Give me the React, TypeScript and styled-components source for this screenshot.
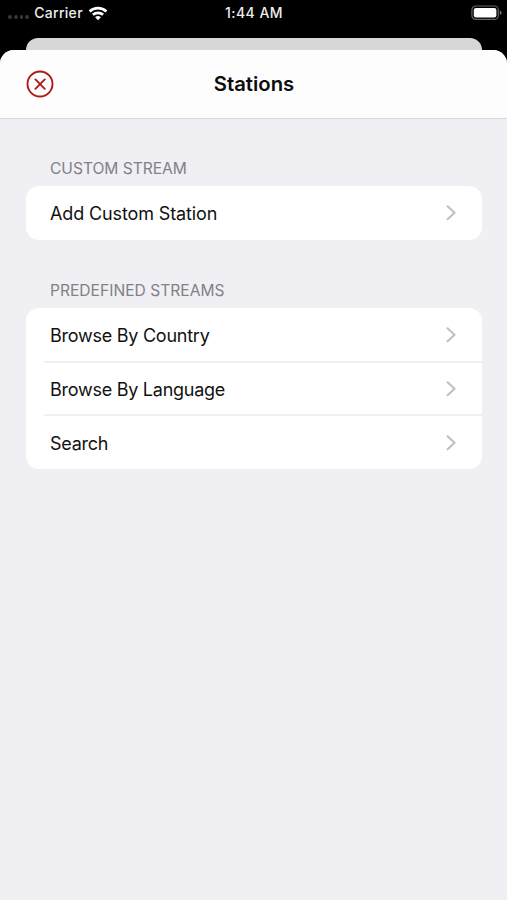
import React from "react";
import styled, { createGlobalStyle } from "styled-components";

const GlobalStyle = createGlobalStyle`
  *, *::before, *::after { box-sizing: border-box; }
  body { margin: 0; background: #000; }
`;

const Screen = styled.div`
  width: 507px;
  height: 900px;
  display: flex;
  flex-direction: column;
  background: #000;
  color: #111;
  font-family: Inter, "Liberation Sans", sans-serif;
  overflow: hidden;
`;

const StatusBar = styled.header`
  height: 38px;
  padding: 0 5px 12px 8px;
  display: grid;
  grid-template-columns: 1fr auto 1fr;
  align-items: center;
  color: #eee;
  font-size: 14px;
  font-weight: 500;
  line-height: 26px;
`;

const Carrier = styled.div`
  display: flex;
  align-items: center;
  gap: 5px;
`;

const SignalDots = styled.div`
  display: flex;
  gap: 2px;
  padding-top: 8px;
`;

const Dot = styled.i`
  width: 3.8px;
  height: 3.8px;
  border-radius: 50%;
  background: #383838;
`;

const Label = styled.span<{ $spacing?: number }>`
  letter-spacing: ${(p) => p.$spacing ?? 0}px;
  white-space: nowrap;
`;

const Clock = styled(Label)`
  margin-right: 2px;
`;

const BatterySlot = styled.div`
  display: flex;
  justify-content: flex-end;
`;

const BackCard = styled.div`
  flex: none;
  height: 26px;
  margin: 0 25px 0 25.5px;
  border-radius: 12px 12px 0 0;
  background: #d7d7da;
`;

const Sheet = styled.main`
  position: relative;
  flex: 1;
  margin-top: -14px;
  border-radius: 14px 14px 0 0;
  background: #efeff4;
  overflow: hidden;
`;

const NavBar = styled.div`
  height: 69px;
  padding: 0 25px 0 26px;
  display: grid;
  grid-template-columns: 28px 1fr 28px;
  align-items: center;
  background: #fdfdfe;
  border-bottom: 1px solid #d9d9dc;
`;

const CloseButton = styled.button`
  width: 28px;
  height: 28px;
  padding: 0;
  border: 0;
  display: flex;
  background: none;
`;

const Title = styled.h1`
  margin: 0;
  color: #0c0c0c;
  font-size: 20.3px;
  font-weight: 600;
  line-height: 28px;
  text-align: center;
`;

const Content = styled.div`
  padding: 39px 25px 0 25.5px;
  display: flex;
  flex-direction: column;
  gap: 40px;
`;

const SectionTitle = styled.h2`
  margin: 0;
  padding: 0 24.5px 6px;
  color: #818186;
  font-size: 15.6px;
  font-weight: 400;
  line-height: 22px;
`;

const Card = styled.div`
  border-radius: 13px;
  background: #fff;
  overflow: hidden;
`;

const Row = styled.div`
  height: 53px;
  margin-left: 18px;
  padding: 0 26px 0 6.5px;
  display: flex;
  align-items: center;
  justify-content: space-between;
  font-size: 18px;
  line-height: 24px;

  & > span {
    padding-top: 2px;
  }

  & + & {
    border-top: 2px solid #f0f0f2;
  }

  &:last-child {
    height: 55px;
  }

  &:only-child {
    height: 54px;
  }
`;

const WifiIcon = () => (
  <svg width="20" height="15" viewBox="0 0 20 15" fill="none" stroke="#fff" strokeWidth="2.7">
    <path d="M1.6 5.4C6.3 1 13.7 1 18.4 5.4" />
    <path d="M4.9 8.8C7.8 6.1 12.2 6.1 15.1 8.8" />
    <path d="M10 14.2 7.1 11.3Q10 8.7 12.9 11.3Z" fill="#fff" stroke="none" />
  </svg>
);

const BatteryIcon = () => (
  <svg width="31" height="16" viewBox="0 0 31 16">
    <rect x="0.9" y="1" width="26.4" height="13.4" rx="4" fill="none" stroke="#666" strokeWidth="1.2" />
    <rect x="2.8" y="2.9" width="22.6" height="9.6" rx="2.2" fill="#fff" />
    <path d="M28.8 5.5q1.8.5 1.8 2.2t-1.8 2.2z" fill="#777" />
  </svg>
);

const CloseIcon = () => (
  <svg width="28" height="28" viewBox="0 0 28 28" fill="none" stroke="#ad1b12" strokeWidth="1.9" strokeLinecap="round">
    <circle cx="14" cy="14" r="12.5" />
    <path d="m9.4 9.4 9.4 9.4m0-9.4-9.4 9.4" />
  </svg>
);

const ChevronIcon = () => (
  <svg width="11" height="18" viewBox="0 0 11 18" fill="none" stroke="#c1c1c4" strokeWidth="2.2" strokeLinecap="round" strokeLinejoin="round">
    <path d="m2.6 2.3 6.9 6.5-6.9 6.5" />
  </svg>
);

const sections = [
  { title: "CUSTOM STREAM", spacing: -0.04, rows: [{ label: "Add Custom Station", spacing: -0.12 }] },
  {
    title: "PREDEFINED STREAMS",
    spacing: 0,
    rows: [
      { label: "Browse By Country", spacing: -0.25 },
      { label: "Browse By Language", spacing: -0.26 },
      { label: "Search", spacing: -0.25 },
    ],
  },
];

export default function App() {
  return (
    <Screen>
      <GlobalStyle />
      <StatusBar>
        <Carrier>
          <SignalDots>
            <Dot />
            <Dot />
            <Dot />
            <Dot />
          </SignalDots>
          <Label $spacing={0.3}>Carrier</Label>
          <WifiIcon />
        </Carrier>
        <Clock $spacing={0.45}>1:44 AM</Clock>
        <BatterySlot>
          <BatteryIcon />
        </BatterySlot>
      </StatusBar>
      <BackCard />
      <Sheet>
        <NavBar>
          <CloseButton aria-label="Close">
            <CloseIcon />
          </CloseButton>
          <Title>Stations</Title>
        </NavBar>
        <Content>
          {sections.map((section) => (
            <section key={section.title}>
              <SectionTitle>
                <Label $spacing={section.spacing}>{section.title}</Label>
              </SectionTitle>
              <Card>
                {section.rows.map((row) => (
                  <Row key={row.label}>
                    <Label $spacing={row.spacing}>{row.label}</Label>
                    <ChevronIcon />
                  </Row>
                ))}
              </Card>
            </section>
          ))}
        </Content>
      </Sheet>
    </Screen>
  );
}
